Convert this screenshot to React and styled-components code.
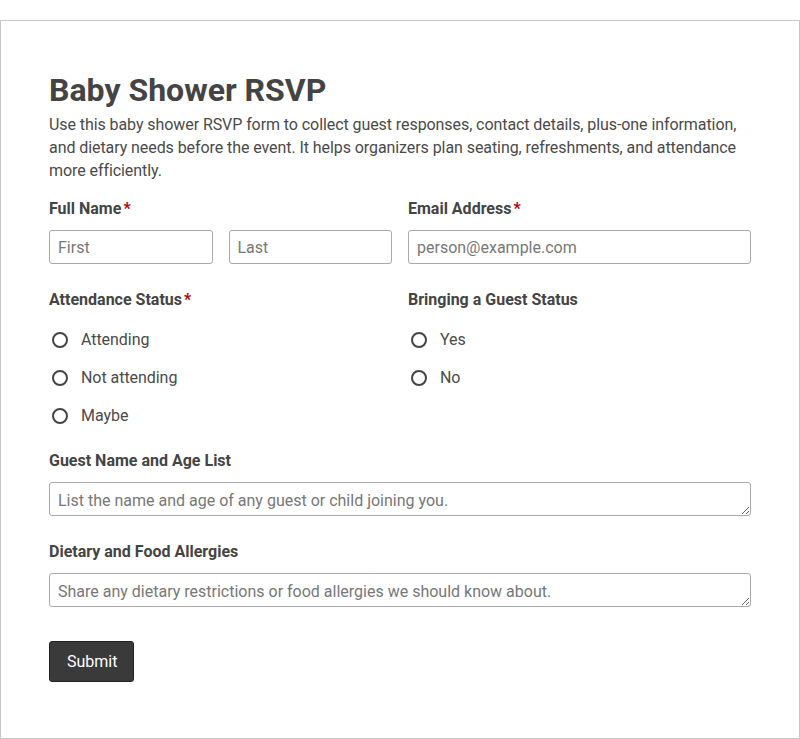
import React from 'react'
import styled, { createGlobalStyle } from 'styled-components'

const GlobalStyle = createGlobalStyle`
  body {
    margin: 0;
    background: #fff;
    font-family: Roboto, "Liberation Sans", sans-serif;
    color: #444;
  }
  * { box-sizing: border-box; }
`

function RadioGroup({ name, options }) {
  return (
    <Options>
      {options.map(opt => (
        <Option key={opt}>
          <Radio type='radio' name={name} />
          <span>{opt}</span>
        </Option>
      ))}
    </Options>
  )
}

export default function App() {
  return (
    <>
      <GlobalStyle />
      <Card>
        <Title>Baby Shower RSVP</Title>
        <Intro>
          Use this baby shower RSVP form to collect guest responses, contact details, plus-one information,
          and dietary needs before the event. It helps organizers plan seating, refreshments, and attendance
          more efficiently.
        </Intro>

        <Row>
          <Field>
            <Label>Full Name<Req>*</Req></Label>
            <Pair>
              <Input placeholder='First' />
              <Input placeholder='Last' />
            </Pair>
          </Field>
          <Field>
            <Label>Email Address<Req>*</Req></Label>
            <Input placeholder='person@example.com' />
          </Field>
        </Row>

        <Row>
          <Field>
            <Label>Attendance Status<Req>*</Req></Label>
            <RadioGroup name='attendance' options={['Attending', 'Not attending', 'Maybe']} />
          </Field>
          <Field>
            <Label>Bringing a Guest Status</Label>
            <RadioGroup name='guest' options={['Yes', 'No']} />
          </Field>
        </Row>

        <Field>
          <Label>Guest Name and Age List</Label>
          <TextArea rows={1} placeholder='List the name and age of any guest or child joining you.' />
        </Field>

        <Field>
          <Label>Dietary and Food Allergies</Label>
          <TextArea rows={1} placeholder='Share any dietary restrictions or food allergies we should know about.' />
        </Field>

        <Submit>Submit</Submit>
      </Card>
    </>
  )
}

const Card = styled.form`
  margin-top: 20px;
  width: 800px;
  height: 719px;
  border: 1px solid #c8c8c8;
  padding: 50px 48px 0 48px;
  display: flex;
  flex-direction: column;
`
const Title = styled.h1`
  margin: 0;
  font-size: 32px;
  line-height: 38px;
  font-weight: 700;
  color: #444;
`
const Intro = styled.p`
  margin: 4px 0 16px;
  font-size: 16px;
  line-height: 23px;
  letter-spacing: -0.075px;
  color: #4a4a4a;
`
const Row = styled.div`
  display: grid;
  grid-template-columns: 1fr 1fr;
  column-gap: 16px;
`
const Field = styled.div`
  display: flex;
  flex-direction: column;
  margin-bottom: 25px;
`
const Label = styled.label`
  font-size: 16px;
  font-weight: 700;
  line-height: 22px;
  color: #444;
  margin-bottom: 10px;
`
const Req = styled.span`
  color: #b80000;
  margin-left: 2px;
`
const Pair = styled.div`
  display: grid;
  grid-template-columns: 1fr 1fr;
  column-gap: 16px;
`
const Input = styled.input`
  height: 34px;
  width: 100%;
  border: 1px solid #aaa;
  border-radius: 3px;
  padding: 0 8px;
  font-family: inherit;
  font-size: 16px;
  color: #444;
  &::placeholder { color: #777; }
`
const TextArea = styled.textarea`
  height: 34px;
  width: 100%;
  border: 1px solid #aaa;
  border-radius: 3px;
  padding: 8px 8px 4px;
  font-family: inherit;
  font-size: 16px;
  line-height: 20px;
  color: #444;
  resize: vertical;
  &::placeholder { color: #777; }
`
const Options = styled.div`
  display: flex;
  flex-direction: column;
  gap: 16px;
  margin-top: 8px;
  margin-bottom: -2px;
`
const Option = styled.label`
  display: flex;
  align-items: center;
  gap: 13px;
  font-size: 16px;
  line-height: 22px;
  letter-spacing: -0.05px;
  color: #4a4a4a;
  padding-left: 3px;
`
const Radio = styled.input`
  appearance: none;
  margin: 0;
  width: 16px;
  height: 16px;
  border: 2px solid #444;
  border-radius: 50%;
  background: #fff;
`
const Submit = styled.button`
  align-self: flex-start;
  margin-top: 9px;
  height: 41px;
  padding: 0 16px 0 17px;
  background: #3a3a3a;
  color: #fff;
  border: 1px solid #222;
  border-radius: 3px;
  font-family: inherit;
  font-size: 16px;
`
